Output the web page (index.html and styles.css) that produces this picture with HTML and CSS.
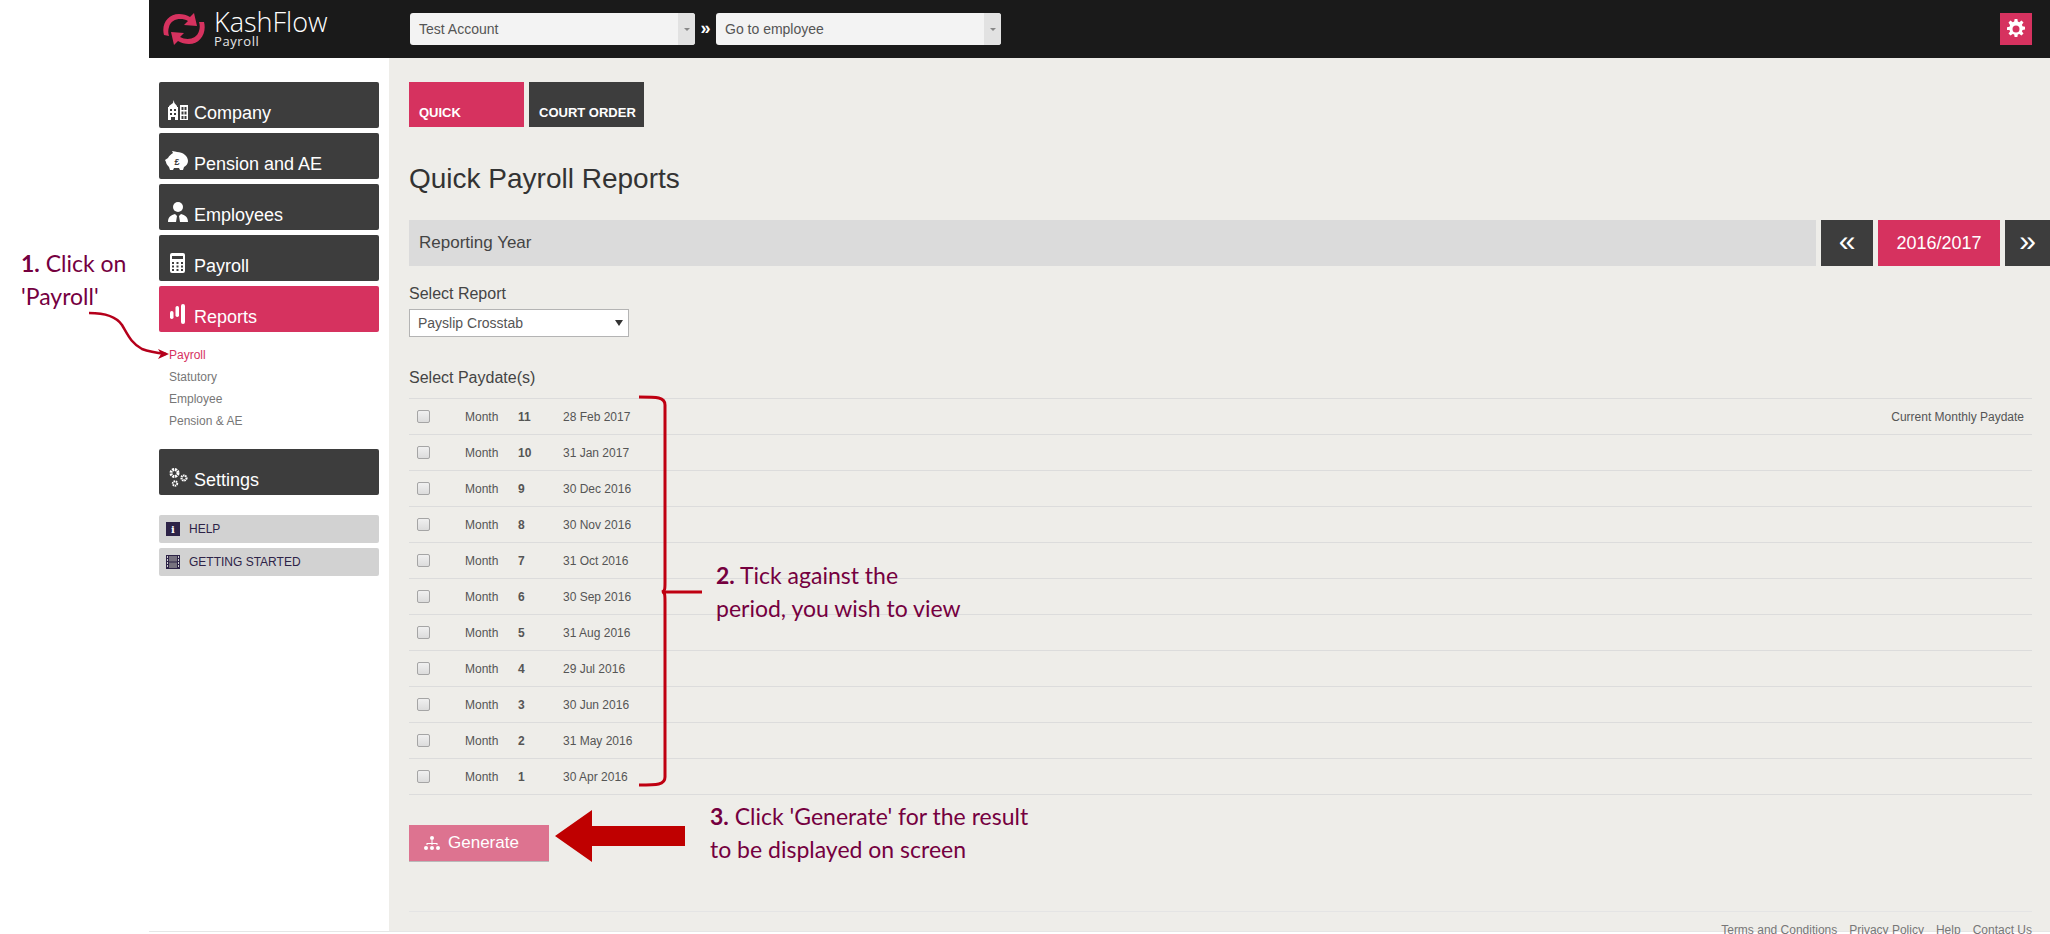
FILE: index.html
```html
<!DOCTYPE html>
<html lang="en">
<head>
    <meta charset="UTF-8">
    <title>KashFlow Payroll - Quick Payroll Reports</title>
    <link rel="stylesheet" href="styles.css">
</head>
<body>
    <div class="app">
        <div class="topbar">
            <div class="logo">
                <svg class="logo-icon" viewBox="0 0 44 36" width="44" height="36">
                    <path d="M2 24C-1 13 6 3 17 3c4 0 8 1 11 3l4-4 3 13-13-1 4-4c-7-4-17-2-19 6-1 3-1 6 0 9z" fill="#d6325f"/>
                    <path d="M42 11c3 11-4 22-15 22-4 0-8-1-11-3l-4 4-3-13 13 1-4 4c7 4 17 2 19-6 1-3 1-6 0-9z" fill="#d6325f"/>
                </svg>
                <div class="logo-text">
                    <div class="logo-name">KashFlow</div>
                    <div class="logo-sub">Payroll</div>
                </div>
            </div>
            <div class="combo combo-first"><span>Test Account</span><i class="combo-arrow"></i></div>
            <div class="combo-sep">&raquo;</div>
            <div class="combo"><span>Go to employee</span><i class="combo-arrow"></i></div>
            <div class="gear-btn">
                <svg viewBox="0 0 20 20" width="20" height="20">
                    <path d="M8.6 0h2.8l.4 2.6 1.5.6L15.500 1.600l2 2-1.600 2.200.6 1.500 2.500.4v2.800l-2.500.4-.6 1.500 1.600 2.200-2 2-2.200-1.600-1.500.6-.4 2.400H8.600l-.4-2.400-1.500-.6-2.200 1.600-2-2 1.600-2.200-.6-1.500L1 11V8.200l2.500-.4.6-1.500L2.500 3.600l2-2 2.200 1.600 1.500-.6zM10 6.400a3.500 3.500 0 1 0 0 7 3.500 3.500 0 0 0 0-7z" fill="#fff" fill-rule="evenodd"/>
                </svg>
            </div>
        </div>

        <div class="main">
            <div class="sidebar">
                <a class="nav-btn">
                    <svg class="nav-icon" viewBox="0 0 20 20"><path d="M5 3l.7-3 .7 3L9 6v1h1v13H0V7h1V6zM2 9v2h2V9zm4 0v2h2V9zm-4 4v2h2v-2zm4 0v2h2v-2zM3 17v3h4v-3zM12 5h8v15h-8zm1.500 2v3h2V7zm3 0v3h2V7zm-3 4.500v3h2v-3zm3 0v3h2v-3zm-3 4.500v3h2v-3zm3 0v3h2v-3z" fill="#fff" fill-rule="evenodd"/></svg>
                    Company
                </a>
                <a class="nav-btn">
                    <svg class="nav-icon nav-icon-wide" viewBox="0 0 24 20"><path d="M0 9l3-2c1-2 3-4 5-5l-1-2c2 0 4 1 5 1 6 0 11 4 11 9 0 3-2 5-4 6l-1 3h-3l-1-2h-5l-1 2H5l-1-3C2 14 1 12 1 11z" fill="#fff"/><text x="9.500" y="14" class="pig-sign">£</text></svg>
                    Pension and AE
                </a>
                <a class="nav-btn">
                    <svg class="nav-icon" viewBox="0 0 20 20"><circle cx="10" cy="5" r="5" fill="#fff"/><path d="M0 20c0-5 3-7 7-8l2 2-1 6zm20 0c0-5-3-7-7-8l-2 2 1 6z" fill="#fff"/></svg>
                    Employees
                </a>
                <a class="nav-btn">
                    <svg class="nav-icon nav-icon-calc" viewBox="0 0 15 20"><path d="M2 0h11a2 2 0 0 1 2 2v16a2 2 0 0 1-2 2H2a2 2 0 0 1-2-2V2a2 2 0 0 1 2-2zm0 3v3h11V3zm0 6v2h2V9zm4.500 0v2h2V9zM11 9v2h2V9zm-9 3.500v2h2v-2zm4.500 0v2h2v-2zm4.500 0v2h2v-2zM2 16v2h2v-2zm4.500 0v2h2v-2zm4.500 0v2h2v-2z" fill="#fff" fill-rule="evenodd"/></svg>
                    Payroll
                </a>
                <a class="nav-btn nav-active">
                    <svg class="nav-icon nav-icon-calc" viewBox="0 0 15 20"><rect x="0" y="7" width="3.500" height="8" rx="1.700" fill="#fff"/><rect x="5.500" y="2" width="3.500" height="11" rx="1.700" fill="#fff"/><rect x="11" y="0" width="4" height="20" rx="2" fill="#fff"/></svg>
                    Reports
                </a>
                <ul class="subnav">
                    <li class="subnav-active">Payroll</li>
                    <li>Statutory</li>
                    <li>Employee</li>
                    <li>Pension &amp; AE</li>
                </ul>
                <a class="nav-btn">
                    <svg class="nav-icon" viewBox="0 0 20 20"><g fill="none" stroke="#fff"><circle cx="6.500" cy="6" r="3.500" stroke-width="3" stroke-dasharray="2 .75"/><circle cx="16" cy="11" r="2.500" stroke-width="2.200" stroke-dasharray="1.500 .6"/><circle cx="7" cy="16.500" r="2.200" stroke-width="2" stroke-dasharray="1.400 .6"/></g></svg>
                    Settings
                </a>
                <a class="help-btn help-first">
                    <span class="help-icon"><b>i</b></span>HELP
                </a>
                <a class="help-btn">
                    <svg class="film-icon" viewBox="0 0 14 14"><rect width="14" height="14" fill="#2d2347"/><rect x="3" y="1" width="8" height="5.500" fill="#77727f"/><rect x="3" y="7.500" width="8" height="5.500" fill="#77727f"/><path d="M1 1h1v2H1zm0 3h1v2H1zm0 3h1v2H1zm0 3h1v2H1zm11-9h1v2h-1zm0 3h1v2h-1zm0 3h1v2h-1zm0 3h1v2h-1z" fill="#d2d2d2"/></svg>
                    GETTING STARTED
                </a>
            </div>

            <div class="content">
                <div class="tabs">
                    <a class="tab tab-active">QUICK</a>
                    <a class="tab">COURT ORDER</a>
                </div>
                <h1>Quick Payroll Reports</h1>
                <div class="year-bar">
                    <div class="year-label">Reporting Year</div>
                    <div class="year-nav">&laquo;</div>
                    <div class="year-value">2016/2017</div>
                    <div class="year-nav year-next">&raquo;</div>
                </div>
                <div class="inner">
                    <label class="field-label">Select Report</label>
                    <div class="report-select">Payslip Crosstab<i class="select-arrow"></i></div>
                    <div class="field-label paydate-label">Select Paydate(s)</div>
                    <div class="paydates">
                        <div class="row"><span class="check"></span><span class="month">Month</span><b class="num">11</b><span class="date">28 Feb 2017</span><span class="current">Current Monthly Paydate</span></div>
                        <div class="row"><span class="check"></span><span class="month">Month</span><b class="num">10</b><span class="date">31 Jan 2017</span></div>
                        <div class="row"><span class="check"></span><span class="month">Month</span><b class="num">9</b><span class="date">30 Dec 2016</span></div>
                        <div class="row"><span class="check"></span><span class="month">Month</span><b class="num">8</b><span class="date">30 Nov 2016</span></div>
                        <div class="row"><span class="check"></span><span class="month">Month</span><b class="num">7</b><span class="date">31 Oct 2016</span></div>
                        <div class="row"><span class="check"></span><span class="month">Month</span><b class="num">6</b><span class="date">30 Sep 2016</span></div>
                        <div class="row"><span class="check"></span><span class="month">Month</span><b class="num">5</b><span class="date">31 Aug 2016</span></div>
                        <div class="row"><span class="check"></span><span class="month">Month</span><b class="num">4</b><span class="date">29 Jul 2016</span></div>
                        <div class="row"><span class="check"></span><span class="month">Month</span><b class="num">3</b><span class="date">30 Jun 2016</span></div>
                        <div class="row"><span class="check"></span><span class="month">Month</span><b class="num">2</b><span class="date">31 May 2016</span></div>
                        <div class="row"><span class="check"></span><span class="month">Month</span><b class="num">1</b><span class="date">30 Apr 2016</span></div>
                    </div>
                    <a class="generate">
                        <svg class="generate-icon" viewBox="0 0 16 14"><circle cx="8" cy="2" r="2" fill="#fff"/><path d="M7.500 4h1v3h5v2h-1V8h-4v1h-1V8h-4v1h-1V7h5z" fill="#fff"/><circle cx="2" cy="12" r="2" fill="#fff"/><circle cx="8" cy="12" r="2" fill="#fff"/><circle cx="14" cy="12" r="2" fill="#fff"/></svg>
                        Generate
                    </a>
                    <div class="footer">
                        <a>Terms and Conditions</a>
                        <a>Privacy Policy</a>
                        <a>Help</a>
                        <a>Contact Us</a>
                    </div>
                </div>
            </div>
        </div>
    </div>

    <!-- callouts drawn over the page -->
    <div class="note note-one"><b>1.</b> Click on<br>'Payroll'</div>
    <div class="note note-two"><b>2.</b> Tick against the<br>period, you wish to view</div>
    <div class="note note-three"><b>3.</b> Click 'Generate' for the result<br>to be displayed on screen</div>

    <svg class="overlay" viewBox="0 0 2050 934" width="2050" height="934">
        <path d="M89 313c14 0 27 3 33 12 6 10 9 18 20 24 8 3 16 4 24 5" fill="none" stroke="#b5001b" stroke-width="2.500"/>
        <path d="M169 354l-11-5 3 5-3 5z" fill="#b5001b"/>
        <path d="M639 397c18 0 26 0 26 8v177c0 7 0 9-3 10 3 0 3 3 3 10v175c0 8-8 8-26 8M662 592h40" fill="none" stroke="#bf0011" stroke-width="3"/>
        <path d="M555 836l37-26v16h93v20h-93v16z" fill="#bf0000"/>
    </svg>
</body>
</html>
```

FILE: styles.css
```css
html, body {
    margin: 0;
    padding: 0;
    height: 934px;
    overflow: hidden;
    background: #fff;
}
body {
    font-family: "Liberation Sans", Arial, sans-serif;
    color: #333;
    position: relative;
}
a {
    display: block;
}
.app {
    margin-left: 149px;
    height: 931px;
    display: flex;
    flex-direction: column;
    border-bottom: 1px solid #e6e6e6;
}
.topbar {
    height: 58px;
    flex-shrink: 0;
    background: #1a1a1a;
    display: flex;
    align-items: center;
    padding-right: 18px;
}
.logo {
    width: 261px;
    flex-shrink: 0;
    display: flex;
    padding-left: 13px;
    box-sizing: border-box;
    align-items: center;
}
.logo-icon {
    flex-shrink: 0;
}
.logo-text {
    margin-left: 8px;
    color: #fff;
}
.logo-name {
    font-family: "Open Sans", sans-serif;
    font-weight: 300;
    font-size: 27px;
    line-height: 28px;
    margin-top: -2px;
}
.logo-sub {
    font-family: "Open Sans", sans-serif;
    font-size: 13px;
    line-height: 13px;
    margin-top: -1px;
    letter-spacing: 0.6px;
    color: #e6e6e6;
}
.combo {
    width: 285px;
    height: 32px;
    background: #f3f3f3;
    border-radius: 3px;
    display: flex;
    align-items: center;
    justify-content: space-between;
    font-size: 14px;
    color: #555;
    overflow: hidden;
}
.combo span {
    padding-left: 9px;
}
.combo-first {
    margin-top: 0;
}
.combo-arrow {
    width: 17px;
    height: 32px;
    background: #e2e2e2;
    position: relative;
}
.combo-arrow::after {
    content: "";
    position: absolute;
    left: 6px;
    top: 15px;
    border: 3px solid transparent;
    border-top-color: #888;
}
.combo-sep {
    width: 21px;
    text-align: center;
    color: #fff;
    font-weight: bold;
    font-size: 18px;
    margin-top: -2px;
}
.gear-btn {
    width: 32px;
    height: 32px;
    margin-left: auto;
    background: #d6325f;
    display: flex;
    align-items: center;
    justify-content: center;
}
.main {
    flex: 1;
    display: flex;
    min-height: 0;
}
.sidebar {
    width: 240px;
    flex-shrink: 0;
    box-sizing: border-box;
    padding: 24px 10px 0;
    background: #fff;
}
.nav-btn {
    height: 46px;
    box-sizing: border-box;
    margin-bottom: 5px;
    padding: 15px 0 0 9px;
    background: #3d3d3d;
    border-radius: 2px;
    color: #fff;
    font-size: 18px;
    line-height: 26px;
    display: flex;
    align-items: center;
}
.nav-active {
    background: #d6325f;
    margin-bottom: 0;
}
.nav-icon {
    width: 20px;
    height: 20px;
    margin-right: 6px;
    flex-shrink: 0;
    margin-top: -5px;
}
.nav-icon-wide {
    width: 24px;
    margin-left: -3px;
    margin-right: 5px;
}
.nav-icon-calc {
    width: 15px;
    margin-left: 2px;
    margin-right: 9px;
}
.pig-sign {
    font-size: 9px;
    font-weight: bold;
    fill: #3d3d3d;
}
.subnav {
    list-style: none;
    margin: 0;
    padding: 12px 0 17px 10px;
    font-size: 12px;
    line-height: 22px;
    color: #777;
}
.subnav-active {
    color: #d6325f;
}
.help-btn {
    height: 28px;
    margin-bottom: 5px;
    background: #d2d2d2;
    border-radius: 2px;
    display: flex;
    align-items: center;
    padding-left: 7px;
    font-size: 12px;
    color: #2d2347;
}
.help-first {
    margin-top: 20px;
}
.help-icon {
    width: 14px;
    height: 14px;
    background: #2d2347;
    color: #fff;
    margin-right: 9px;
    display: flex;
    align-items: center;
    justify-content: center;
    font-family: "DejaVu Serif", serif;
    font-size: 10px;
}
.film-icon {
    width: 14px;
    height: 14px;
    margin-right: 9px;
}
.content {
    flex: 1;
    min-width: 0;
    background: #eeede9;
    padding: 24px 0 0 20px;
}
.tabs {
    display: flex;
    gap: 5px;
}
.tab {
    width: 115px;
    height: 45px;
    box-sizing: border-box;
    padding: 23px 0 0 10px;
    background: #3d3d3d;
    color: #fff;
    font-weight: bold;
    font-size: 13px;
    line-height: 16px;
}
.tab-active {
    background: #d6325f;
}
h1 {
    margin: 32px 0 21px;
    font-size: 28px;
    line-height: 40px;
    font-weight: normal;
    color: #333;
}
.year-bar {
    display: flex;
    height: 46px;
    gap: 5px;
    font-size: 18px;
    line-height: 46px;
}
.year-label {
    flex: 1;
    background: #dbdbdb;
    padding-left: 10px;
    font-size: 17px;
    color: #444;
}
.year-nav {
    width: 52px;
    background: #3d3d3d;
    color: #fff;
    text-align: center;
    font-size: 30px;
    line-height: 42px;
}
.year-next {
    width: 45px;
}
.year-value {
    width: 122px;
    background: #d6325f;
    color: #fff;
    text-align: center;
}
.inner {
    padding-right: 18px;
}
.field-label {
    display: block;
    margin-top: 18px;
    font-size: 16px;
    line-height: 20px;
    color: #444;
}
.report-select {
    width: 220px;
    height: 28px;
    box-sizing: border-box;
    margin-top: 5px;
    padding-left: 8px;
    background: #fff;
    border: 1px solid #b4b4b4;
    font-size: 14px;
    line-height: 26px;
    color: #555;
    position: relative;
}
.select-arrow {
    position: absolute;
    right: 5px;
    top: 10px;
    border: 4px solid transparent;
    border-top: 6px solid #333;
    border-bottom: 0;
}
.paydate-label {
    margin-top: 31px;
}
.paydates {
    margin-top: 10px;
    border-top: 1px solid #dcdcdc;
}
.row {
    height: 36px;
    box-sizing: border-box;
    border-bottom: 1px solid #dcdcdc;
    display: flex;
    align-items: center;
    font-size: 12px;
    color: #555;
}
.check {
    width: 11px;
    height: 11px;
    margin-left: 8px;
    border: 1px solid #a5a5a5;
    border-radius: 2px;
    background: linear-gradient(#f0f0f0, #dcdcdc);
    flex-shrink: 0;
}
.month {
    margin-left: 35px;
    width: 53px;
}
.num {
    width: 45px;
}
.current {
    margin-left: auto;
    margin-right: 8px;
}
.generate {
    width: 140px;
    height: 37px;
    margin-top: 30px;
    box-sizing: border-box;
    background: #dd7390;
    border-bottom: 1px solid #b9b9b9;
    color: #fff;
    font-size: 17px;
    display: flex;
    align-items: center;
    padding-left: 15px;
}
.generate-icon {
    width: 16px;
    height: 14px;
    margin-right: 8px;
}
.footer {
    margin-top: 49px;
    border-top: 1px solid #e4e4e4;
    padding-top: 11px;
    display: flex;
    justify-content: flex-end;
    gap: 12px;
    font-size: 12px;
    color: #777;
}
.note {
    position: absolute;
    font-family: Lato, "Open Sans", sans-serif;
    font-size: 23px;
    line-height: 33px;
    color: #75003f;
}
.note-one {
    left: 21px;
    top: 247px;
}
.note-two {
    left: 716px;
    top: 559px;
}
.note-three {
    left: 710px;
    top: 800px;
}
.overlay {
    position: absolute;
    left: 0;
    top: 0;
    pointer-events: none;
}
```
